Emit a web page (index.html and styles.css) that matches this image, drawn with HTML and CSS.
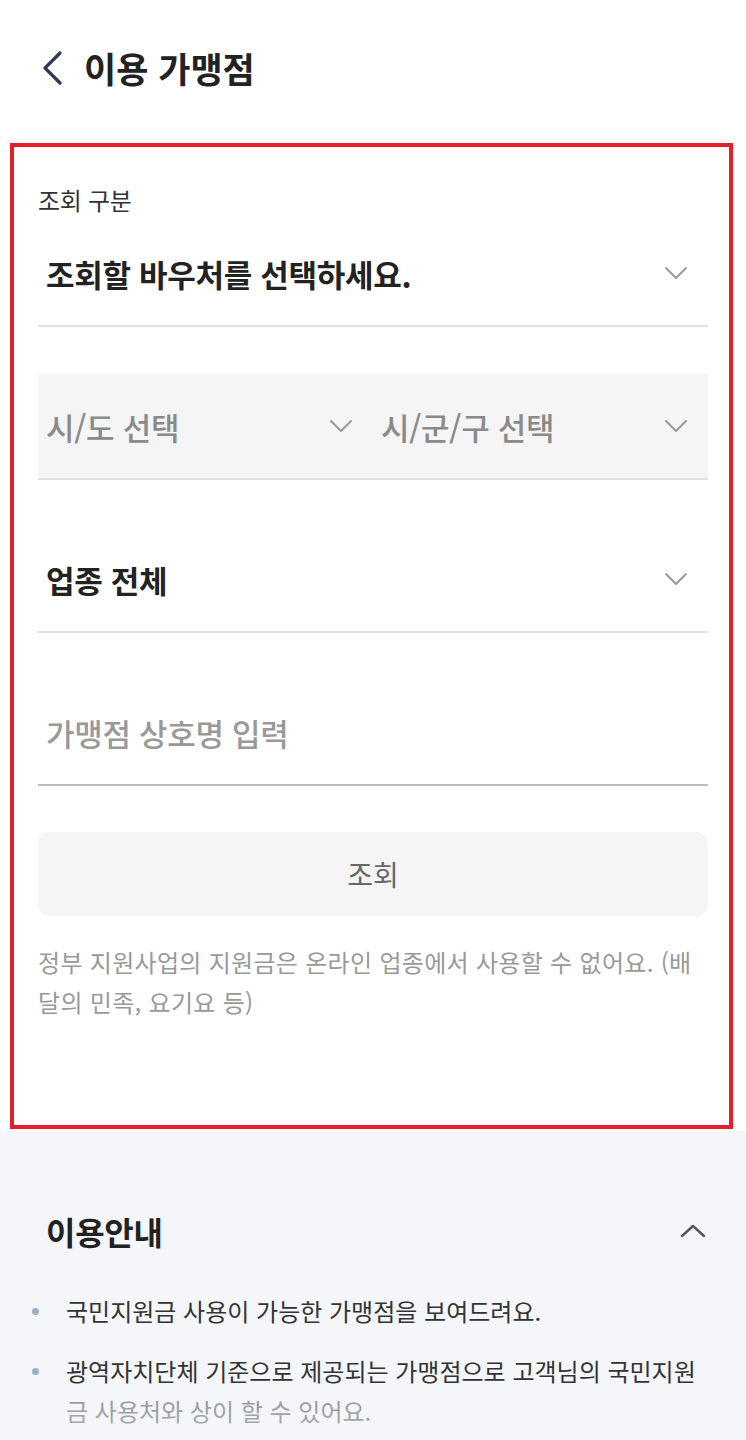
FILE: index.html
```html
<!DOCTYPE html>
<html lang="ko">
	<head>
		<meta charset="UTF-8">
		<title>이용 가맹점</title>
		<link rel="stylesheet" href="styles.css">
	</head>
	<body>
		<div class="top">
			<div class="header">
				<svg class="back" width="24" height="34" viewBox="0 0 24 34">
					<path d="M20 2 L5 17 L20 32" fill="none" stroke="#2b3a55" stroke-width="3.2" stroke-linecap="round" stroke-linejoin="round" />
				</svg>
				<h1>이용 가맹점</h1>
			</div>

			<div class="panel">
				<div class="label">조회 구분</div>
				<div class="field first">
					<span class="value">조회할 바우처를 선택하세요.</span>
					<svg class="chev" width="24" height="14" viewBox="0 0 24 14"><path d="M2 2 L12 12 L22 2" /></svg>
				</div>

				<div class="region">
					<div class="half">
						<span>시/도 선택</span>
						<svg class="chev" width="24" height="14" viewBox="0 0 24 14"><path d="M2 2 L12 12 L22 2" /></svg>
					</div>
					<div class="half">
						<span>시/군/구 선택</span>
						<svg class="chev" width="24" height="14" viewBox="0 0 24 14"><path d="M2 2 L12 12 L22 2" /></svg>
					</div>
				</div>

				<div class="field">
					<span class="value">업종 전체</span>
					<svg class="chev" width="24" height="14" viewBox="0 0 24 14"><path d="M2 2 L12 12 L22 2" /></svg>
				</div>

				<div class="field input">
					<span class="placeholder">가맹점 상호명 입력</span>
				</div>

				<div class="btn">조회</div>

				<p class="note">정부 지원사업의 지원금은 온라인 업종에서 사용할 수 없어요. (배달의 민족, 요기요 등)</p>
			</div>
		</div>

		<div class="guide">
			<div class="guide-head">
				<h2>이용안내</h2>
				<svg class="chev up" width="26" height="14" viewBox="0 0 26 14"><path d="M2 12 L13 2 L24 12" /></svg>
			</div>
			<ul>
				<li>국민지원금 사용이 가능한 가맹점을 보여드려요.</li>
				<li>광역자치단체 기준으로 제공되는 가맹점으로 고객님의 국민지원금 사용처와 상이 할 수 있어요.</li>
			</ul>
			<div class="fade"></div>
		</div>
	</body>
</html>
```

FILE: styles.css
```css
* {
	margin: 0;
	padding: 0;
	box-sizing: border-box;
}

body {
	font-family: "Noto Sans CJK KR", "Noto Sans", sans-serif;
	color: #222;
	background: #f4f6fa;
	width: 746px;
	height: 1440px;
	overflow: hidden;
}

.top {
	background: #fff;
	padding-bottom: 2px;
}

.header {
	height: 143px;
	display: flex;
	align-items: center;
	padding-left: 40px;
	padding-bottom: 8px;
}

.back {
	margin-right: 20px;
}

h1 {
	font-size: 35px;
	font-weight: 700;
	color: #222;
}

.panel {
	margin-left: 10px;
	width: 723px;
	border: 4px solid #e5202e;
	padding: 37px 21px 0 24px;
	height: 986px;
}

.label {
	font-size: 24px;
	line-height: 32px;
	color: #333;
	letter-spacing: -0.3px;
}

.field {
	display: flex;
	align-items: center;
	justify-content: space-between;
	height: 106px;
	margin-top: 47px;
	padding: 0 20px 0 8px;
	border-bottom: 2px solid #e2e2e2;
}

.field.first {
	margin-top: 0;
	height: 111px;
	padding-top: 5px;
}

.value {
	font-size: 31px;
	font-weight: 700;
	letter-spacing: -0.3px;
	color: #222;
}

.chev path {
	fill: none;
	stroke: #9a9a9a;
	stroke-width: 2;
	stroke-linecap: round;
	stroke-linejoin: round;
}

.region {
	display: flex;
	height: 106px;
	margin-top: 47px;
	background: #f5f5f5;
	border-bottom: 2px solid #e0e0e0;
}

.half {
	width: 335px;
	display: flex;
	align-items: center;
	justify-content: space-between;
	padding: 0 20px 0 8px;
	font-size: 31px;
	font-weight: 500;
	color: #8a8a8a;
	letter-spacing: -0.3px;
}

.input {
	border-bottom-color: #bdbdbd;
}

.placeholder {
	font-size: 31px;
	font-weight: 500;
	color: #999;
	letter-spacing: -0.3px;
}

.btn {
	margin-top: 46px;
	height: 84px;
	border-radius: 12px;
	background: #f5f5f5;
	display: flex;
	align-items: center;
	justify-content: center;
	font-size: 28px;
	color: #666;
}

.note {
	margin-top: 26px;
	font-size: 24px;
	line-height: 40px;
	color: #999;
	letter-spacing: 0.3px;
}

.guide {
	position: relative;
	padding: 0 40px 0 46px;
	height: 310px;
}

.guide-head {
	display: flex;
	align-items: center;
	justify-content: space-between;
	height: 200px;
}

h2 {
	font-size: 32px;
	font-weight: 700;
	letter-spacing: -0.3px;
	color: #222;
}

.chev.up path {
	stroke: #555;
	stroke-width: 2.4;
}

ul {
	list-style: none;
	margin-left: -14px;
	margin-top: -40px;
}

li {
	position: relative;
	padding-left: 34px;
	font-size: 24px;
	line-height: 40px;
	color: #333;
	letter-spacing: 0;
	margin-bottom: 20px;
}

li::before {
	content: "";
	position: absolute;
	left: 0;
	top: 17px;
	width: 7px;
	height: 7px;
	border-radius: 50%;
	background: #9bb0c6;
}

.fade {
	position: absolute;
	left: 0;
	right: 0;
	bottom: 0;
	height: 48px;
	background: linear-gradient(rgba(244, 246, 250, 0.5), rgba(244, 246, 250, 0.65));
}
```
